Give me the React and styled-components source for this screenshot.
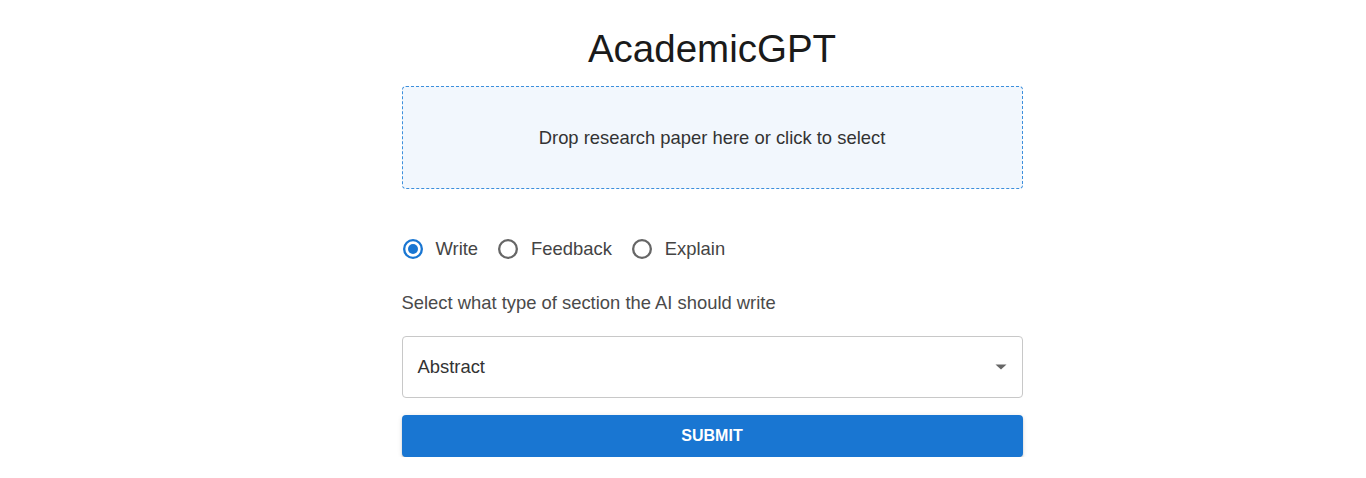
import React, { useState } from "react";
import styled, { createGlobalStyle } from "styled-components";

const GlobalStyle = createGlobalStyle`
  body {
    margin: 0;
    background: #fff;
    font-family: "Liberation Sans", Arial, sans-serif;
  }
`;

const Page = styled.div`
  padding-top: 27px;
  padding-left: 58px;
  display: flex;
  justify-content: center;
`;

const Container = styled.div`
  width: 621px;
  display: flex;
  flex-direction: column;
`;

const Title = styled.h1`
  margin: 0;
  font-size: 38.5px;
  line-height: 44px;
  font-weight: 400;
  color: #1a1a1a;
  text-align: center;
`;

const Dropzone = styled.div`
  margin-top: 15px;
  height: 103px;
  box-sizing: border-box;
  border: 1px dashed #3d8fdc;
  border-radius: 4px;
  background: #f2f7fd;
  display: flex;
  align-items: center;
  justify-content: center;
  font-size: 18.4px;
  color: #333;
  cursor: pointer;
`;

const RadioRow = styled.div`
  margin-top: 39px;
  height: 42px;
  display: flex;
  align-items: center;
  gap: 19px;
`;

const RadioOption = styled.label`
  display: flex;
  align-items: center;
  gap: 13px;
  font-size: 18.4px;
  color: #444;
  cursor: pointer;
  padding-left: 1px;
`;

const Hint = styled.div`
  margin-top: 23px;
  font-size: 18.4px;
  line-height: 20px;
  color: #4a4a4a;
`;

const SelectBox = styled.div`
  margin-top: 23px;
  height: 62px;
  box-sizing: border-box;
  border: 1px solid #c8c8c8;
  border-radius: 4px;
  display: flex;
  align-items: center;
  justify-content: space-between;
  padding: 0 15px 0 15px;
  font-size: 18.4px;
  color: #333;
`;

const SubmitButton = styled.button`
  margin-top: 17px;
  height: 42px;
  border: none;
  border-radius: 4px;
  background: #1976d2;
  color: #fff;
  font-family: "Liberation Sans", Arial, sans-serif;
  font-size: 16px;
  font-weight: 700;
  text-transform: uppercase;
  box-shadow: 0 3px 1px -2px rgba(0, 0, 0, 0.2), 0 2px 2px 0 rgba(0, 0, 0, 0.14),
    0 1px 5px 0 rgba(0, 0, 0, 0.12);
  cursor: pointer;
`;

function RadioIcon({ checked }) {
  const color = checked ? "#1976d2" : "#666";
  return (
    <svg width="20" height="20" viewBox="0 0 20 20">
      <circle cx="10" cy="10" r="8.85" fill="none" stroke={color} strokeWidth="2.3" />
      {checked && <circle cx="10" cy="10" r="5" fill={color} />}
    </svg>
  );
}

export default function App() {
  const [mode, setMode] = useState("Write");
  const modes = ["Write", "Feedback", "Explain"];

  return (
    <Page>
      <GlobalStyle />
      <Container>
        <Title>AcademicGPT</Title>
        <Dropzone>Drop research paper here or click to select</Dropzone>
        <RadioRow>
          {modes.map((m) => (
            <RadioOption key={m} onClick={() => setMode(m)}>
              <RadioIcon checked={mode === m} />
              {m}
            </RadioOption>
          ))}
        </RadioRow>
        <Hint>Select what type of section the AI should write</Hint>
        <SelectBox>
          <span>Abstract</span>
          <svg width="12" height="6" viewBox="0 0 12 6">
            <path d="M0.5 0.5 L6 5.5 L11.5 0.5 Z" fill="#666" />
          </svg>
        </SelectBox>
        <SubmitButton>Submit</SubmitButton>
      </Container>
    </Page>
  );
}
